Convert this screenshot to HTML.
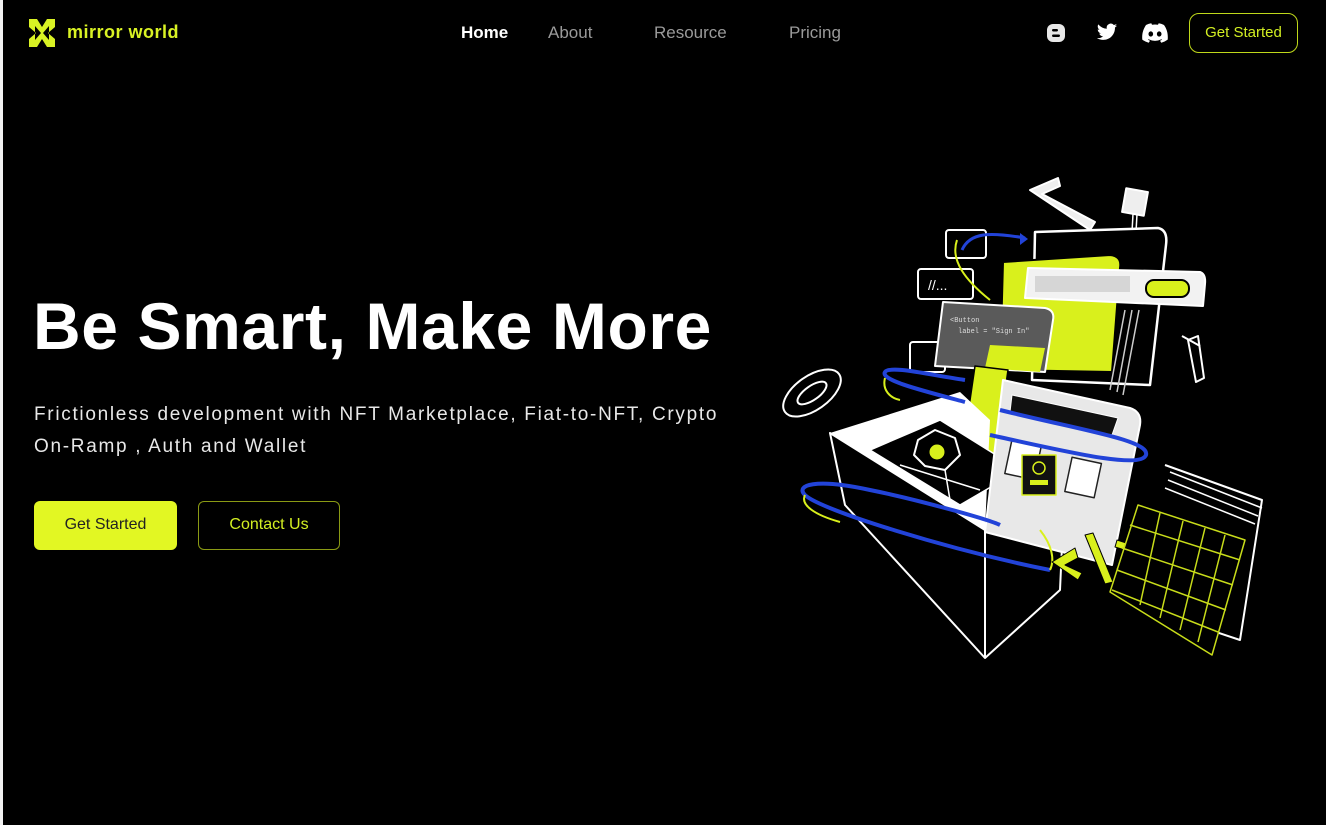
<!DOCTYPE html>
<html><head><meta charset="utf-8"><style>
*{margin:0;padding:0;box-sizing:border-box}
html,body{width:1326px;height:825px;overflow:hidden;background:#000;font-family:"Liberation Sans",sans-serif}
.edge{position:absolute;left:0;top:0;width:3px;height:825px;background:#f2f2f2}
.logo{position:absolute;left:28px;top:18px}
.logotxt{position:absolute;left:67px;top:22px;color:#d9f224;font-weight:bold;font-size:18px;letter-spacing:0.5px}
.nav a{position:absolute;top:23px;font-size:17px;color:#9a9a9a;text-decoration:none}
.btn1{position:absolute;left:1189px;top:13px;width:109px;height:40px;border:1.5px solid #bfd81a;border-radius:10px;color:#d3ef22;font-size:15px;text-align:center;line-height:38px}
h1{position:absolute;left:33px;top:288px;color:#fff;font-size:66px;font-weight:bold;letter-spacing:0.6px;white-space:nowrap}
.sub{position:absolute;left:34px;top:399px;color:#e8e8e8;font-size:19px;line-height:32px;white-space:nowrap;letter-spacing:1.7px}
.gs{position:absolute;left:34px;top:501px;width:143px;height:49px;background:#e2f723;border-radius:6px;color:#222;font-size:16px;text-align:center;line-height:48px}
.cu{position:absolute;left:198px;top:501px;width:142px;height:49px;border:1.5px solid #8a9a14;border-radius:6px;color:#d3ef22;font-size:16px;text-align:center;line-height:46px}
</style></head><body>
<div class="edge"></div>
<svg class="logo" width="28" height="30" viewBox="0 0 28 30"><path d="M1 1 L9 1 L14 9 L19 1 L27 1 L27 9 L20 15 L27 21 L27 29 L19 29 L14 21 L9 29 L1 29 L1 21 L8 15 L1 9 Z M7 8 L7 22 L13 15 Z M21 8 L15 15 L21 22 Z" fill="#d9f224" fill-rule="evenodd"/></svg>
<div class="logotxt">mirror world</div>
<div class="nav">
<a style="left:461px;color:#fff;font-weight:bold">Home</a>
<a style="left:548px">About</a>
<a style="left:654px">Resource</a>
<a style="left:789px">Pricing</a>
</div>
<svg style="position:absolute;left:1046px;top:23px" width="20" height="20" viewBox="0 0 20 20"><rect x="1" y="1" width="18" height="18" rx="6" fill="#e8e8e8"/><rect x="6" y="6" width="6" height="2.5" rx="1.2" fill="#000"/><rect x="6" y="11.5" width="8" height="2.5" rx="1.2" fill="#000"/></svg>
<svg style="position:absolute;left:1096px;top:23px" width="22" height="19" viewBox="0 0 24 20"><path d="M23 2.5c-.8.4-1.7.6-2.6.7.9-.6 1.6-1.4 2-2.5-.9.5-1.9.9-2.9 1.1A4.5 4.5 0 0 0 11.8 5.9 12.8 12.8 0 0 1 2.5 1.2a4.5 4.5 0 0 0 1.4 6c-.7 0-1.4-.2-2-.6 0 2.2 1.6 4 3.6 4.4-.7.2-1.4.2-2 .1.6 1.8 2.3 3.1 4.2 3.1A9 9 0 0 1 1 16.1 12.7 12.7 0 0 0 7.9 18c8.3 0 12.8-6.9 12.8-12.8v-.6c.9-.6 1.7-1.4 2.3-2.1z" fill="#fff"/></svg>
<svg style="position:absolute;left:1142px;top:23px" width="26" height="20" viewBox="0 0 26 20"><path d="M22 2A21 21 0 0 0 16.7.3l-.7 1.4a19 19 0 0 0-6 0L9.3.3A21 21 0 0 0 4 2C.7 7 -.2 11.8.3 16.6A21 21 0 0 0 6.7 19.8l1.3-2.1c-.7-.3-1.4-.6-2-1l.5-.4a15 15 0 0 0 13 0l.5.4c-.6.4-1.3.7-2 1l1.3 2.1a21 21 0 0 0 6.4-3.2C26.2 11 25 6.2 22 2zM8.8 13.6c-1.3 0-2.3-1.2-2.3-2.6s1-2.6 2.3-2.6 2.3 1.2 2.3 2.6-1 2.6-2.3 2.6zm8.4 0c-1.3 0-2.3-1.2-2.3-2.6s1-2.6 2.3-2.6 2.3 1.2 2.3 2.6-1 2.6-2.3 2.6z" fill="#fff"/></svg>
<div class="btn1">Get Started</div>
<h1>Be Smart, Make More</h1>
<div class="sub">Frictionless development with NFT Marketplace, Fiat-to-NFT, Crypto<br>On-Ramp , Auth and Wallet</div>
<div class="gs">Get Started</div>
<div class="cu">Contact Us</div>

<svg style="position:absolute;left:0;top:0" width="1326" height="825" viewBox="0 0 1326 825" fill="none" stroke-linejoin="round">
<path d="M1030 190 L1058 178 L1060 186 L1042 194 L1095 222 L1090 230 Z" fill="#eee" stroke="#fff" stroke-width="2"/>
<rect x="1124" y="190" width="22" height="24" fill="#eee" stroke="#fff" stroke-width="2" transform="rotate(10 1135 202)"/>
<path d="M1133 214 L1132 232 M1137 214 L1136 232" stroke="#fff" stroke-width="1.5"/>
<path d="M1035 232 L1158 228 Q1168 230 1166 245 L1150 385 L1032 380 Z" fill="#000" stroke="#fff" stroke-width="2.5"/>
<path d="M1003 262 L1110 255 Q1122 256 1120 268 L1112 372 L1000 370 Z" fill="#d9f01c" stroke="#000" stroke-width="2"/>
<path d="M1125 310 L1110 390 M1132 310 L1117 392 M1139 310 L1123 395" stroke="#ccc" stroke-width="1.5"/>
<path d="M1028 268 L1200 272 Q1206 274 1205 284 L1203 306 L1025 298 Z" fill="#f2f2f2" stroke="#fff" stroke-width="2"/>
<rect x="1035" y="276" width="95" height="16" fill="#d6d6d6"/>
<rect x="1146" y="280" width="43" height="17" rx="8" fill="#d9f01c" stroke="#000" stroke-width="2"/>
<rect x="946" y="230" width="40" height="28" rx="3" stroke="#fff" stroke-width="2"/>
<rect x="918" y="269" width="55" height="30" rx="3" stroke="#fff" stroke-width="2"/>
<text x="928" y="290" fill="#fff" font-family="Liberation Sans" font-size="14" stroke="none">//...</text>
<rect x="910" y="342" width="35" height="30" rx="3" stroke="#fff" stroke-width="2"/>
<path d="M943 302 L1045 308 Q1055 310 1053 320 L1045 372 L935 366 Z" fill="#5a5a5a" stroke="#fff" stroke-width="2"/>
<path d="M990 345 L1045 348 L1040 372 L985 368 Z" fill="#d9f01c"/>
<text x="950" y="322" fill="#ddd" font-family="Liberation Mono" font-size="7" stroke="none">&lt;Button</text>
<text x="958" y="333" fill="#ddd" font-family="Liberation Mono" font-size="7" stroke="none">label = "Sign In"</text>
<path d="M975 366 L1008 370 L995 462 L962 455 Z" fill="#d9f01c" stroke="#000" stroke-width="1.5"/>
<path d="M1188 340 L1198 336 L1204 378 L1196 382 Z" stroke="#fff" stroke-width="2"/>
<path d="M1182 336 L1200 346" stroke="#fff" stroke-width="2"/>
<ellipse cx="812" cy="393" rx="33" ry="17" transform="rotate(-35 812 393)" stroke="#fff" stroke-width="2"/>
<ellipse cx="812" cy="393" rx="17" ry="7" transform="rotate(-35 812 393)" stroke="#fff" stroke-width="2"/>
<path d="M830 433 L960 392 L990 420 L985 530 Z" fill="#fff"/>
<path d="M830 433 L985 530 L985 658 L845 505 Z" fill="#000" stroke="#fff" stroke-width="2"/>
<path d="M985 530 L1065 480 L1060 590 L985 658" stroke="#fff" stroke-width="2"/>
<path d="M870 450 L940 420 L1020 470 L960 505 Z" fill="#000" stroke="#fff" stroke-width="1.5"/>
<path d="M900 465 L980 490 M940 440 L950 500" stroke="#fff" stroke-width="1.5"/>
<polygon points="918,440 935,430 955,438 960,455 945,470 925,466 914,455" fill="#000" stroke="#fff" stroke-width="2"/>
<circle cx="937" cy="452" r="8" fill="#d9f01c" stroke="#000"/>
<path d="M1003 380 L1130 408 Q1142 412 1140 425 L1112 565 L985 532 Z" fill="#e8e8e8" stroke="#fff" stroke-width="2"/>
<path d="M1012 395 L1118 418 L1112 435 L1010 412 Z" fill="#111" stroke="#fff"/>
<rect x="1008" y="442" width="30" height="35" fill="#fff" stroke="#222" stroke-width="1.5" transform="rotate(12 1023 460)"/>
<rect x="1068" y="460" width="30" height="35" fill="#fff" stroke="#222" stroke-width="1.5" transform="rotate(12 1083 478)"/>
<rect x="1022" y="455" width="34" height="40" fill="#111" stroke="#d9f01c" stroke-width="1.5"/>
<circle cx="1039" cy="468" r="6" stroke="#d9f01c" stroke-width="1.5"/>
<rect x="1030" y="480" width="18" height="5" fill="#d9f01c"/>
<path d="M1000 410 C1080 430 1150 440 1146 455 C1140 470 1060 450 990 435" stroke="#2243d8" stroke-width="4"/>
<path d="M965 402 C920 390 880 380 885 372 C890 365 930 375 965 380" stroke="#2243d8" stroke-width="4"/>
<path d="M885 378 C882 390 890 398 900 400" stroke="#d9f01c" stroke-width="2"/>
<path d="M1050 570 C950 550 820 510 805 495 C795 485 815 478 870 490 C920 500 990 520 1000 525" stroke="#2243d8" stroke-width="4"/>
<path d="M805 495 C800 505 815 515 840 522" stroke="#d9f01c" stroke-width="2"/>
<path d="M1040 530 C1052 545 1055 560 1050 570" stroke="#d9f01c" stroke-width="2"/>
<path d="M957 240 C950 260 965 280 990 300" stroke="#d9f01c" stroke-width="2"/>
<path d="M962 250 C970 232 990 232 1025 238" stroke="#2243d8" stroke-width="3"/>
<path d="M1020 233 L1028 239 L1020 245 Z" fill="#2243d8"/>
<path d="M1052 562 L1075 548 L1078 558 L1065 565 L1082 573 L1078 580 Z" fill="#d9f01c" stroke="#000"/>
<path d="M1085 535 L1093 533 L1113 582 L1105 584 Z" fill="#d9f01c" stroke="#000"/>
<path d="M1117 540 L1148 550 L1120 575 L1116 568 L1135 553 L1115 547 Z" fill="#d9f01c" stroke="#000"/>
<path d="M1165 465 L1262 500 L1240 640 L1150 610" stroke="#fff" stroke-width="2"/>
<path d="M1170 472 L1262 508 M1168 480 L1258 516 M1165 488 L1255 524" stroke="#fff" stroke-width="1.5"/>
<g stroke="#c8dc1a" stroke-width="1.5">
<path d="M1138 505 L1245 540 L1212 655 L1110 592 Z" fill="#000"/>
<path d="M1130 525 L1240 560 M1122 548 L1233 585 M1117 570 L1226 610 M1112 590 L1218 632"/>
<path d="M1160 513 L1140 605 M1183 521 L1160 618 M1205 528 L1180 630 M1225 535 L1198 642"/>
</g>
</svg>
</body></html>
